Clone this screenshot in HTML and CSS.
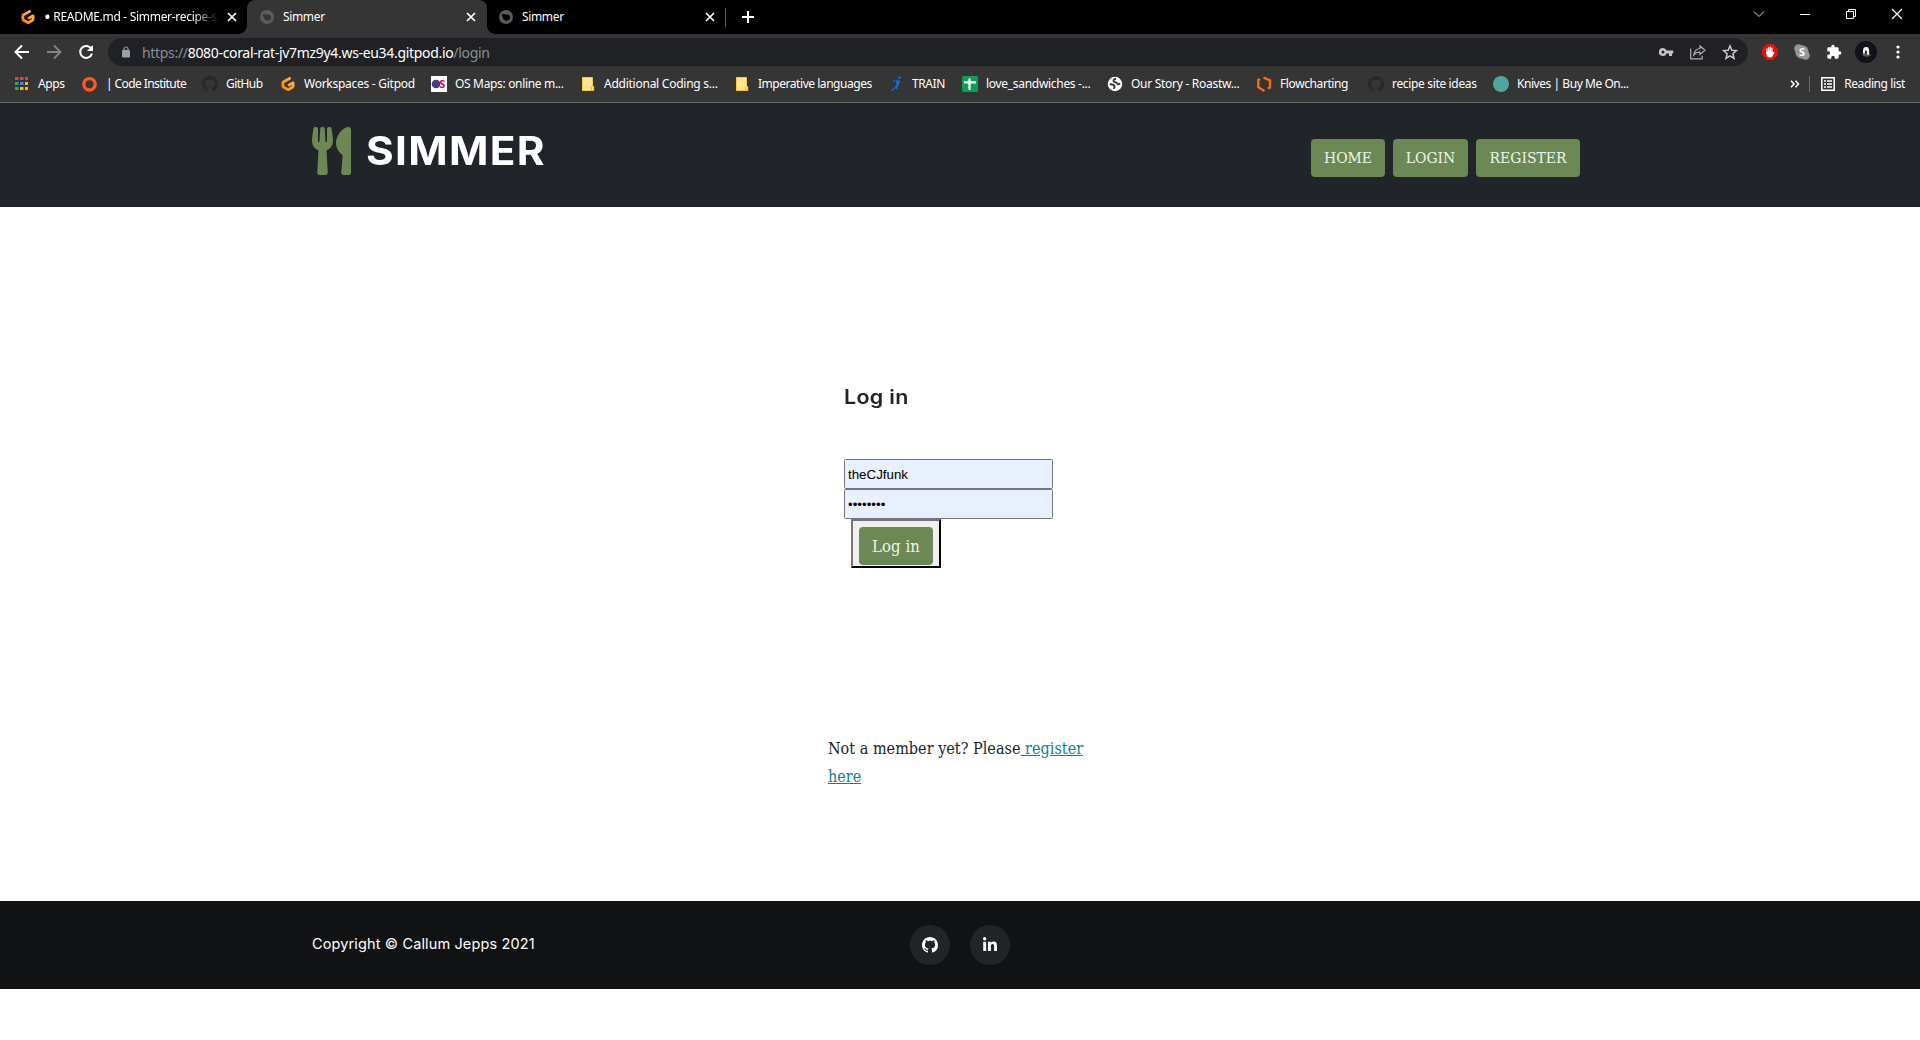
FILE: index.html
```html
<!DOCTYPE html>
<html lang="en">
<head>
<meta charset="utf-8">
<title>Simmer</title>
<link rel="stylesheet" href="styles.css">
</head>
<body>
<svg class="defs" width="0" height="0">
  <defs>
    <linearGradient id="orange" x1="1" y1="0" x2="0" y2="1"><stop offset="0" stop-color="#ffb45b"/><stop offset="1" stop-color="#ff8a00"/></linearGradient>
    <symbol id="octocat" viewBox="0 0 16 16"><path fill="currentColor" fill-rule="evenodd" d="M8 0C3.58 0 0 3.58 0 8c0 3.54 2.29 6.53 5.47 7.59.4.07.55-.17.55-.38 0-.19-.01-.82-.01-1.49-2.01.37-2.53-.49-2.69-.94-.09-.23-.48-.94-.82-1.13-.28-.15-.68-.52-.01-.53.63-.01 1.08.58 1.23.82.72 1.21 1.87.87 2.33.66.07-.52.28-.87.51-1.07-1.78-.2-3.64-.89-3.64-3.95 0-.87.31-1.59.82-2.15-.08-.2-.36-1.02.08-2.12 0 0 .67-.21 2.2.82.64-.18 1.32-.27 2-.27.68 0 1.36.09 2 .27 1.53-1.04 2.2-.82 2.2-.82.44 1.1.16 1.92.08 2.12.51.56.82 1.27.82 2.15 0 3.07-1.87 3.75-3.65 3.95.29.25.54.73.54 1.48 0 1.07-.01 1.93-.01 2.2 0 .21.15.46.55.38A8.01 8.01 0 0 0 16 8c0-4.42-3.58-8-8-8z"/></symbol>
    <symbol id="gitpod" viewBox="0 0 16 16"><path d="M9.600 2.500 3.700 5.700Q2.900 6.200 2.900 7v3q0 .8.800 1.200l3.900 2.200q.6.300 1.200 0l3.700-2.200q.6-.4.600-1.100V6.800L9 9" fill="none" stroke="url(#orange)" stroke-width="2.800" stroke-linecap="round" stroke-linejoin="round"/></symbol>
    <symbol id="simmer" viewBox="0 0 16 16"><path fill="#5c5c5c" fill-rule="evenodd" d="M8 1a7 7 0 1 0 0 14A7 7 0 0 0 8 1zM4 5.300c2.200-.8 2.700.3 4.200.3 1.500-.1 2.500-.3 3.600 1.300.8 1.800.3 3.400-1.600 4.400-2 .8-3.800.2-4.800-1.100C4.700 8.700 4.800 7.500 3.700 6.800z"/></symbol>
    <symbol id="close" viewBox="0 0 10 10"><path d="M1 1l8 8M9 1L1 9" stroke="#fff" stroke-width="1.700"/></symbol>
    <symbol id="note" viewBox="0 0 16 16"><path d="M2.500 1.500h10v9h1.200v4H2.500z" fill="#ffe58f" stroke="#f5cb45"/><path d="M11.500 11v3.500" stroke="#e6b526"/></symbol>
  </defs>
</svg>

<header class="browser">
  <div class="tabs">
    <div class="tab tab-first"><svg class="i16"><use href="#gitpod"/></svg><span class="tab-title fade"><span class="dot">•</span> README.md - Simmer-recipe-s</span><svg class="x"><use href="#close"/></svg></div>
    <div class="tab active"><svg class="i16"><use href="#simmer"/></svg><span class="tab-title">Simmer</span><svg class="x"><use href="#close"/></svg></div>
    <div class="tab last"><svg class="i16"><use href="#simmer"/></svg><span class="tab-title">Simmer</span><svg class="x"><use href="#close"/></svg></div>
    <svg class="plus" viewBox="0 0 12 12"><path d="M6 0v12M0 6h12" stroke="#fff" stroke-width="2"/></svg>
    <div class="window-buttons">
      <svg width="12" height="12" viewBox="0 0 12 12"><path d="M1 3.500l5 5 5-5" fill="none" stroke="#ddd"/></svg>
      <svg width="12" height="12" viewBox="0 0 12 12"><path d="M1 6.500h10" stroke="#fff"/></svg>
      <svg width="12" height="12" viewBox="0 0 12 12"><path d="M1.500 3.500h7v7h-7zM3.500 3V1.500h7v7H9" fill="none" stroke="#fff"/></svg>
      <svg width="12" height="12" viewBox="0 0 12 12"><path d="M1 1l10 10M11 1L1 11" stroke="#fff" stroke-width="1.200"/></svg>
    </div>
  </div>

  <div class="toolbar">
    <svg class="nav-icon" viewBox="0 0 16 16"><path d="M15 8H2M8 1.500L1.500 8 8 14.500" fill="none" stroke="#fff" stroke-width="1.900"/></svg>
    <svg class="nav-icon" viewBox="0 0 16 16"><path d="M1 8h13M8 1.500L14.500 8 8 14.500" fill="none" stroke="#858585" stroke-width="1.800"/></svg>
    <svg class="nav-icon" viewBox="0 0 16 16"><path d="M13.300 4.700A6 6 0 1 0 14 9.500" fill="none" stroke="#fff" stroke-width="2"/><path d="M15 1v6H9z" fill="#fff"/></svg>
    <div class="omnibox">
      <svg class="lock" viewBox="0 0 8 12"><path d="M2 5V3a2 2 0 0 1 4 0v2" fill="none" stroke="#9aa0a6" stroke-width="1.200"/><rect y="4" width="8" height="7.500" rx="1" fill="#9aa0a6"/></svg>
      <span class="url">https://<b>8080-coral-rat-jv7mz9y4.ws-eu34.gitpod.io</b>/login</span>
      <div class="omni-icons">
        <svg width="16" height="16" viewBox="0 0 16 16"><path fill="#c4c4c4" fill-rule="evenodd" d="M5 4a4 4 0 1 0 3.600 5.400H11V12h3V9.400h1.200V6.600H8.600A4 4 0 0 0 5 4zm0 2.500a1.500 1.500 0 1 1 0 3 1.500 1.500 0 0 1 0-3z"/></svg>
        <svg width="16" height="16" viewBox="0 0 16 16"><path d="M.7 4.500v10.300h11.500v-3M10 2l5 4.300-5 4.200V8.200c-3 0-4.700.8-6.200 2.700C4.300 7.500 6 5 10 4.500z" fill="none" stroke="#b0b0b0" stroke-width="1.200"/></svg>
        <svg width="16" height="16" viewBox="0 0 16 16"><path d="M8 1.800l1.800 4.400 4.700.4-3.600 3.100 1.100 4.600L8 11.800l-4 2.500 1.100-4.600L1.500 6.600l4.700-.4z" fill="none" stroke="#c8c8c8" stroke-width="1.500"/></svg>
      </div>
    </div>
    <div class="extensions">
      <svg width="16" height="16" viewBox="0 0 16 16"><path d="M5 0h6l5 5v6l-5 5H5l-5-5V5z" fill="#ea0d0d"/><path d="M5 9V5M6.700 8V3.700M8.300 8V3M9.900 8V4" stroke="#fff" stroke-width="1.300" stroke-linecap="round"/><path d="M4.350 7.500h6.200V9l.8-.9c.7-.5 1.300 0 1 .6L10.700 12c-.5 1-1.200 1.400-2.400 1.400-2.800 0-3.950-1.400-3.950-4z" fill="#fff"/></svg>
      <svg width="16" height="16" viewBox="0 0 16 16"><g fill="#969696"><circle cx="8" cy="8" r="6.700"/><circle cx="4.500" cy="4.500" r="4.300"/><circle cx="11.500" cy="11.500" r="4.300"/></g><text x="8" y="12" text-anchor="middle" class="skype">S</text></svg>
      <svg width="16" height="16" viewBox="0 0 24 24"><path fill="#fff" d="M20.500 11H19V7a2 2 0 0 0-2-2h-4V3.500a2.500 2.500 0 0 0-5 0V5H4a2 2 0 0 0-2 2v3.800h1.500a2.700 2.700 0 0 1 0 5.400H2V20a2 2 0 0 0 2 2h3.800v-1.500a2.700 2.700 0 0 1 5.400 0V22H17a2 2 0 0 0 2-2v-4h1.500a2.500 2.500 0 0 0 0-5z"/></svg>
      <svg width="22" height="22" viewBox="0 0 22 22"><circle cx="11" cy="11" r="11" fill="#11121a"/><path d="M7 13l2-1 5 .5 2 2-2.500 1-2 .3-3-.8z" fill="#6d5543"/><path d="M8 9.500C8 6.500 10 5.500 12 6c2 .6 2.300 2.500 2.200 7.500l-2 .3-.6-4-1.400-.4-.3 3.100H8z" fill="#f3efeb"/></svg>
      <svg width="4" height="14" viewBox="0 0 4 14"><g fill="#fff"><circle cx="2" cy="2" r="1.600"/><circle cx="2" cy="7" r="1.600"/><circle cx="2" cy="12" r="1.600"/></g></svg>
    </div>
  </div>

  <nav class="bookmarks">
    <a class="bm w-apps"><svg class="i16" viewBox="0 0 16 16"><path fill="#ea4335" d="M1 1h3.500v3H1zM6 1h3.500v3H6zM11 1h3v3h-3z"/><path fill="#34a853" d="M1 6h3.500v3H1zM1 11h3.500v3H1z"/><path fill="#4285f4" d="M6 6h3.500v3H6z"/><path fill="#fbbc04" d="M11 6h3v3h-3zM6 11h3.500v3H6zM11 11h3v3h-3z"/></svg><span>Apps</span></a>
    <a class="bm w-code"><svg class="i16" viewBox="0 0 16 16"><circle cx="7.500" cy="8.300" r="5.700" fill="none" stroke="#ff5722" stroke-width="3.400"/></svg><span>| Code Institute</span></a>
    <a class="bm w-github"><svg class="i16 dark"><use href="#octocat"/></svg><span>GitHub</span></a>
    <a class="bm w-gitpod"><svg class="i16"><use href="#gitpod"/></svg><span>Workspaces - Gitpod</span></a>
    <a class="bm w-maps"><svg class="i16" viewBox="0 0 16 16"><path fill="#fff" d="M0 0h16v16H0z"/><circle cx="5" cy="8" r="4.300" fill="#453c90"/><text x="8.300" y="12.300" class="os">S</text></svg><span>OS Maps: online m...</span></a>
    <a class="bm w-add"><svg class="i16"><use href="#note"/></svg><span>Additional Coding s...</span></a>
    <a class="bm w-imp"><svg class="i16"><use href="#note"/></svg><span>Imperative languages</span></a>
    <a class="bm w-train"><svg class="i16" viewBox="0 0 16 16"><circle cx="11.500" cy="1.800" r="1.300" fill="#0875e1"/><path d="M5 5h6.500L9.500 9.500 3.500 15M9.300 9l-.6 4.500" fill="none" stroke="#0875e1" stroke-width="1.200"/><path d="M8.500 5h3.300l-1.600 4.600-2 .9z" fill="#0875e1"/></svg><span>TRAIN</span></a>
    <a class="bm w-love"><svg class="i16" viewBox="0 0 16 16"><rect width="16" height="16" rx="1.200" fill="#0f9d58"/><path d="M2 6.300h12M7.500 2.500V14" stroke="#fff" stroke-width="2.200"/></svg><span>love_sandwiches -...</span></a>
    <a class="bm w-story"><svg class="i16" viewBox="0 0 16 16"><circle cx="8" cy="8" r="7.200" fill="#fff"/><path d="M9 2.800c-2 .3-3 1.400-2.200 2.700.8 1.100 2.700.6 3.200 1.900.5 1.100 1.800.8 3.200.2M2.800 8c2 .8 3.500.4 4.500 1.600.8 1.200-.5 1.700-.2 3.300" fill="none" stroke="#383838" stroke-width="2"/></svg><span>Our Story - Roastw...</span></a>
    <a class="bm w-flow"><svg class="i16" viewBox="0 0 16 16"><path d="M4 3L2.300 4v7.200L8.500 15M7.500 1.700L14 4.400v7l-2 1.200" fill="none" stroke="#f96b13" stroke-width="2.400"/></svg><span>Flowcharting</span></a>
    <a class="bm w-recipe"><svg class="i16 dark"><use href="#octocat"/></svg><span>recipe site ideas</span></a>
    <a class="bm w-knives"><svg class="i16" viewBox="0 0 16 16"><circle cx="8" cy="8" r="8" fill="#50a69c"/></svg><span>Knives | Buy Me On...</span></a>
    <div class="reading">
      <svg class="chev" viewBox="0 0 10 8"><path d="M1 .8L4 4 1 7.200M5.500.8l3 3.200-3 3.200" fill="none" stroke="#fff" stroke-width="1.500"/></svg>
      <i class="sep"></i>
      <svg class="list" viewBox="0 0 14 14"><path d="M.8.800h12.400v12.400H.8z" fill="none" stroke="#fff" stroke-width="1.500"/><path d="M3 4h2M3 7h2M3 10h2M6 4h5M6 7h5M6 10h5" stroke="#fff" stroke-width="1.400"/></svg>
      <span>Reading list</span>
    </div>
  </nav>
</header>

<header class="site-header">
  <div class="brand">
    <svg class="utensils" viewBox="0 0 416 512"><path fill="#6c8955" d="M207.900 15.200c.8 4.700 16.100 94.500 16.100 128.800 0 52.300-27.800 89.600-68.900 104.600L168 486.700c.7 13.700-10.200 25.300-24 25.300H80c-13.700 0-24.700-11.500-24-25.300l12.900-238.100C27.700 233.600 0 196.200 0 144 0 109.600 15.300 19.900 16.100 15.200 19.300-5.100 61.400-5.400 64 16.300v141.200c1.300 3.400 15.100 3.200 16 0 1.400-25.300 7.900-139.200 8-141.800 3.300-20.800 44.700-20.800 47.900 0 .2 2.700 6.600 116.500 8 141.800.9 3.200 14.800 3.400 16 0V16.300c2.600-21.600 44.800-21.400 48-1.100zm119.200 285.700l-15 185.100c-1.200 14 9.900 26 23.900 26h56c13.300 0 24-10.700 24-24V24c0-13.200-10.700-24-24-24-82.500 0-221.400 178.500-64.900 300.900z"/></svg>
    <h1>SIMMER</h1>
  </div>
  <nav class="menu"><a class="btn home">HOME</a><a class="btn login">LOGIN</a><a class="btn register">REGISTER</a></nav>
</header>

<main>
  <form class="login-form">
    <h2>Log in</h2>
    <input class="field" type="text" value="theCJfunk">
    <input class="field" type="password" value="password">
    <button class="submit" type="button"><span class="btn">Log in</span></button>
  </form>
  <p class="member">Not a member yet? Please<a href="#"> register<br>here</a></p>
</main>

<footer>
  <span class="copyright">Copyright © Callum Jepps 2021</span>
  <div class="social">
    <a><svg class="i16"><use href="#octocat"/></svg></a>
    <a><svg width="14" height="16" viewBox="0 0 448 512"><path fill="#fff" d="M100.280 448H7.400V148.900h92.880zM53.790 108.100C24.090 108.100 0 83.500 0 53.800a53.790 53.790 0 0 1 107.580 0c0 29.700-24.100 54.300-53.790 54.300zM447.900 448h-92.680V302.400c0-34.700-.7-79.200-48.290-79.200-48.290 0-55.690 37.700-55.690 76.700V448h-92.780V148.900h89.080v40.800h1.300c12.400-23.500 42.690-48.300 87.880-48.300 94 0 111.280 61.900 111.280 142.300V448z"/></svg></a>
  </div>
</footer>
</body>
</html>
```

FILE: styles.css
```css
* { box-sizing: border-box; }
body { margin: 0; height: 1040px; overflow: hidden; background: #fff; color: #212529; font-family: "DejaVu Serif Condensed", "DejaVu Serif", serif; font-stretch: condensed; }
svg { display: block; flex: none; }
.defs { position: absolute; }
.i16 { width: 16px; height: 16px; }
.dark { color: #24292e; }

/* browser chrome */
.browser { height: 103px; background: #353535; border-bottom: 1px solid #696969; color: #fff; font: 12px "Noto Sans", sans-serif; display: flex; flex-direction: column; }
.tabs { height: 34px; background: #000; display: flex; flex: none; }
.tab { position: relative; width: 239px; display: flex; align-items: center; padding: 0 11px 0 12px; }
.tab-first { width: 247px; padding-left: 20px; padding-right: 10px; }
.tab .i16 { margin-right: 8px; }
.tab-title { flex: 1; white-space: nowrap; overflow: hidden; letter-spacing: -.35px; font-size: 12px; line-height: 17px; padding-bottom: 2px; }
.fade { -webkit-mask-image: linear-gradient(90deg, #000 85%, transparent); mask-image: linear-gradient(90deg, #000 85%, transparent); letter-spacing: -.3px; margin-right: 8px; }
.dot { font-size: 18px; line-height: 12px; vertical-align: -2px; }
.x { width: 10px; height: 10px; }
.active { background: #353535; border-radius: 8px 8px 0 0; width: 240px; }
.active::before, .active::after { content: ""; position: absolute; bottom: 0; width: 8px; height: 8px; }
.active::before { left: -8px; background: radial-gradient(circle at 0 0, #000 7.5px, #353535 8px); }
.active::after { right: -8px; background: radial-gradient(circle at 100% 0, #000 7.5px, #353535 8px); }
.last::after { content: ""; position: absolute; right: 0; top: 8px; width: 1px; height: 19px; background: #5a5a5a; }
.last { padding-left: 11px; }
.plus { width: 12px; height: 12px; margin: 11px 0 0 16px; }
.window-buttons { margin-left: auto; display: flex; gap: 34px; padding: 8px 17px 0 0; }

.toolbar { height: 34px; flex: none; display: flex; align-items: center; padding: 2px 20px 0 14px; }
.nav-icon { width: 16px; height: 16px; margin-right: 16px; }
.omnibox { margin-left: -2px; width: 1640px; height: 28px; border-radius: 14px; background: #202124; display: flex; align-items: center; padding: 0 10px 0 14px; }
.lock { width: 8px; height: 12px; margin-right: 12px; }
.url { font-size: 14px; color: #8b8d91; letter-spacing: -.32px; white-space: nowrap; }
.url b { font-weight: 400; color: #fff; }
.omni-icons { margin-left: auto; display: flex; gap: 16px; }
.extensions { margin-left: auto; display: flex; align-items: center; gap: 16px; }
.extensions svg:nth-child(4) { margin: 0 3px 0 -3px; }
.skype { font: bold 11px "Noto Sans", sans-serif; fill: #fff; }
.os { font: bold 11px "Noto Sans", sans-serif; fill: #d40058; }

.bookmarks { height: 34px; display: flex; align-items: center; padding-left: 14px; margin-top: -1px; white-space: nowrap; letter-spacing: -.4px; }
.bookmarks span { padding-bottom: 2px; }
.bm { display: flex; align-items: center; gap: 8px; flex: none; }
.w-apps { width: 68px; }
.w-code { width: 120px; letter-spacing: -.58px; }
.w-github { width: 78px; letter-spacing: -.55px; }
.w-gitpod { width: 151px; letter-spacing: -.27px; }
.w-maps { width: 149px; letter-spacing: -.33px; }
.w-add { width: 154px; letter-spacing: -.25px; }
.w-imp { width: 154px; letter-spacing: -.46px; }
.w-train { width: 74px; }
.w-love { width: 145px; letter-spacing: -.3px; }
.w-story { width: 149px; letter-spacing: -.28px; }
.w-flow { width: 112px; }
.w-recipe { width: 125px; letter-spacing: -.34px; }
.w-knives { letter-spacing: -.45px; }
.reading { margin-left: auto; display: flex; align-items: center; padding-right: 15px; }
.chev { width: 10px; height: 8px; }
.sep { width: 1px; height: 16px; background: #6b6b6b; margin: 0 11px 0 9px; }
.list { width: 14px; height: 14px; margin-right: 9px; }

/* site */
.site-header { height: 104px; background: #212529; display: flex; justify-content: space-between; align-items: flex-start; padding: 24px 340px 0 312px; }
.brand { display: flex; gap: 15px; }
.utensils { width: 39px; height: 48px; }
h1 { margin: 0; font: 700 39px/48px Inter, sans-serif; letter-spacing: 1.2px; color: #fff; transform: scaleX(1.085); transform-origin: left; }
.menu { display: flex; gap: 8px; padding-top: 12px; }
.btn { display: flex; align-items: center; justify-content: center; height: 38px; border-radius: 4px; background: #6c8955; color: #eef5e8; font: 15.500px "DejaVu Serif Condensed", "DejaVu Serif", serif; font-stretch: condensed; }
.home { width: 74px; }
.login { width: 75px; }
.register { width: 104px; }

main { height: 694px; padding: 177px 0 0 828px; }
.login-form { display: flex; flex-direction: column; align-items: flex-start; padding-left: 16px; }
h2 { margin: 0 0 49px; font: 600 19.500px/26px Inter, sans-serif; letter-spacing: .3px; transform: scaleX(1.1); transform-origin: left; }
.field { width: 209px; height: 30px; border: 1px solid #767676; border-radius: 1.500px; background: #e8f0fe; padding: 1px 3px; font: 13.333px "Liberation Sans", sans-serif; color: #000; outline: none; }
.submit { width: 90px; height: 49px; margin-left: 7px; padding: 6px 6px 1px; border: 2px outset #767676; border-color: #767676 #212121 #212121 #767676; background: #efefef; }
.submit .btn { font-size: 16.500px; letter-spacing: .1px; }
.member { margin: 167px 0 0; font-size: 16px; line-height: 28px; letter-spacing: .03px; }
.member a { color: #147d91; }

footer { height: 88px; background: #111214; color: #fff; display: flex; align-items: center; padding-left: 312px; }
.copyright { width: 598px; font: 14.500px Inter, sans-serif; letter-spacing: .13px; margin-top: -3px; }
.social { display: flex; gap: 20px; }
.social a { width: 40px; height: 40px; border-radius: 50%; background: #212529; display: flex; align-items: center; justify-content: center; color: #fff; }
```
